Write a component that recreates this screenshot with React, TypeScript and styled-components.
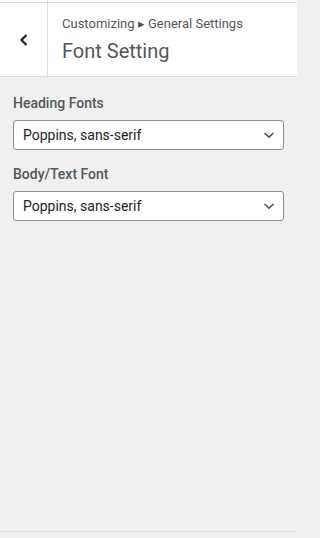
import React from "react";
import styled, { createGlobalStyle } from "styled-components";

const GlobalStyle = createGlobalStyle`
  html, body {
    margin: 0;
    padding: 0;
    background: #f0f0f1;
  }
  body {
    font-family: Roboto, "Noto Sans", "Liberation Sans", sans-serif;
    color: #50575e;
  }
`;

const Panel = styled.div`
  width: 297px;
  height: 538px;
  display: flex;
  flex-direction: column;
  background: #f0f0f1;
`;

const TopStrip = styled.div`
  height: 2px;
  background: #fff;
  display: flex;
  &::before {
    content: "";
    width: 47px;
    border-right: 1px solid #dcdcde;
  }
`;

const Header = styled.div`
  display: flex;
  height: 73px;
  background: #fff;
  border-top: 1px solid #dcdcde;
  border-bottom: 1px solid #dcdcde;
`;

const BackButton = styled.button`
  width: 48px;
  flex: none;
  display: flex;
  align-items: center;
  justify-content: center;
  background: #fff;
  border: none;
  border-right: 1px solid #dcdcde;
  padding: 0;
  cursor: pointer;
`;

const Titles = styled.div`
  display: flex;
  flex-direction: column;
  padding: 11px 14px 0 14px;
`;

const Crumb = styled.span`
  font-size: 13px;
  line-height: 20px;
  color: #50575e;
`;

const Title = styled.h3`
  margin: 4px 0 0;
  font-size: 20px;
  font-weight: 400;
  line-height: 26px;
  color: #50575e;
`;

const Controls = styled.div`
  display: flex;
  flex-direction: column;
  gap: 14px;
  padding: 16px 13px 0 13px;
  flex: 1;
`;

const Control = styled.div`
  display: flex;
  flex-direction: column;
  gap: 7px;
`;

const Label = styled.label`
  font-size: 14px;
  font-weight: 500;
  line-height: 20px;
  color: #50575e;
`;

const SelectBox = styled.div`
  height: 30px;
  box-sizing: border-box;
  display: flex;
  align-items: center;
  justify-content: space-between;
  padding: 0 8px 0 9px;
  background: #fff;
  border: 1px solid #8c8f94;
  border-radius: 3px;
  font-size: 14px;
  color: #1d2327;
`;

const Footer = styled.div`
  height: 6px;
  border-top: 1px solid #dcdcde;
`;

function Chevron() {
  return (
    <svg width="12" height="12" viewBox="0 0 12 12">
      <path d="M1.5 4 L6 8.2 L10.5 4" fill="none" stroke="#50575e" strokeWidth="1.6" />
    </svg>
  );
}

function BackArrow() {
  return (
    <svg width="12" height="14" viewBox="0 0 12 14">
      <path d="M8.5 2 L3.5 7 L8.5 12" fill="none" stroke="#1d2327" strokeWidth="2.2" />
    </svg>
  );
}

function FontSelect({ label, value }: { label: string; value: string }) {
  return (
    <Control>
      <Label>{label}</Label>
      <SelectBox>
        <span>{value}</span>
        <Chevron />
      </SelectBox>
    </Control>
  );
}

export default function App() {
  return (
    <>
      <GlobalStyle />
      <Panel>
        <TopStrip />
        <Header>
          <BackButton aria-label="Back">
            <BackArrow />
          </BackButton>
          <Titles>
            <Crumb>Customizing ▸ General Settings</Crumb>
            <Title>Font Setting</Title>
          </Titles>
        </Header>
        <Controls>
          <FontSelect label="Heading Fonts" value="Poppins, sans-serif" />
          <FontSelect label="Body/Text Font" value="Poppins, sans-serif" />
        </Controls>
        <Footer />
      </Panel>
    </>
  );
}
